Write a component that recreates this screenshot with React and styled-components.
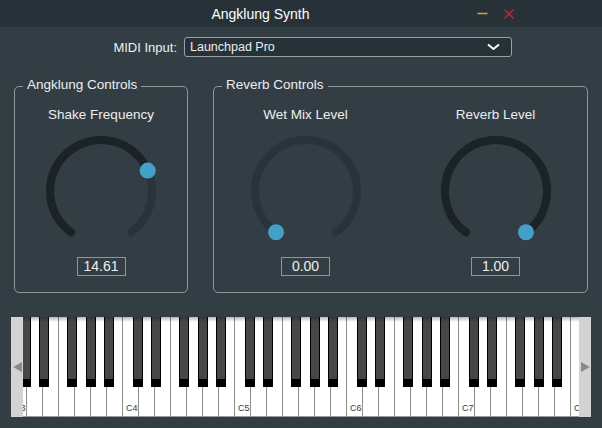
import React from 'react';
import styled, { createGlobalStyle } from 'styled-components';

const GlobalStyle = createGlobalStyle`
  html, body {
    margin: 0;
    padding: 0;
    background: #323e44;
  }
  body {
    font-family: "Liberation Sans", Arial, sans-serif;
  }
`;

const Window = styled.div`
  width: 602px;
  height: 428px;
  background: #323e44;
  color: #eceeef;
  display: flex;
  flex-direction: column;
  overflow: hidden;
`;

const TitleBar = styled.div`
  flex: none;
  height: 27px;
  background: #263238;
  display: flex;
  align-items: center;
  padding-right: 88px;
  font-size: 14px;
  color: #ffffff;
`;

const TitleText = styled.div`
  flex: 1;
  padding-left: 44px;
  text-align: center;
`;

const TitleButtons = styled.div`
  display: flex;
  align-items: center;
  gap: 16px;

  svg {
    display: block;
  }
`;

const MidiRow = styled.div`
  display: flex;
  align-items: center;
  padding-top: 10px;
  height: 20px;
`;

const MidiLabel = styled.div`
  width: 177px;
  margin-right: 7px;
  text-align: right;
  font-size: 13px;
`;

const Combo = styled.div`
  width: 328px;
  height: 20px;
  box-sizing: border-box;
  border: 1px solid #97a0a4;
  border-radius: 3px;
  background: #263238;
  display: flex;
  align-items: center;
  justify-content: space-between;
  padding: 0 11px 0 5px;
  font-size: 12.5px;
`;

const GroupRow = styled.div`
  display: flex;
  gap: 25px;
  margin-top: 29px;
  padding: 0 14px;
  height: 207px;
`;

const Group = styled.div`
  position: relative;
  box-sizing: border-box;
  height: 207px;
  border: 1.5px solid #8d979c;
  border-radius: 5px;
  display: flex;
  gap: ${p => (p.$gap ? `${p.$gap}px` : '0')};
  width: ${p => (p.$width ? `${p.$width}px` : 'auto')};
  flex: ${p => (p.$width ? 'none' : '1')};
`;

const GroupTitle = styled.div`
  position: absolute;
  top: -10px;
  left: 8px;
  padding: 0 4px;
  background: #323e44;
  font-size: 13.5px;
  line-height: 16px;
`;

const KnobColumn = styled.div`
  display: flex;
  flex-direction: column;
  align-items: center;
  padding-top: 20px;
  width: ${p => (p.$width ? `${p.$width}px` : '100%')};
  flex: none;

  svg {
    display: block;
    margin-top: 8px;
  }
`;

const KnobLabel = styled.div`
  font-size: 13.5px;
  line-height: 16px;
  white-space: nowrap;
`;

const ValueBox = styled.div`
  margin-top: 6px;
  width: 49px;
  height: 19px;
  box-sizing: border-box;
  border: 1px solid #8d979c;
  font-size: 14px;
  line-height: 17px;
  text-align: center;
`;

const Keyboard = styled.div`
  position: relative;
  margin: 24px 11px 0;
  width: 580px;
  height: 100px;
  overflow: hidden;
  background: #ffffff;
  display: flex;

  &::after {
    content: '';
    position: absolute;
    left: 0;
    right: 0;
    top: 0;
    height: 5px;
    background: linear-gradient(rgba(0, 0, 0, 0.28), rgba(0, 0, 0, 0));
    pointer-events: none;
  }
`;

const WhiteKey = styled.div`
  flex: none;
  width: 16px;
  height: 100px;
  box-sizing: border-box;
  border-right: 1px solid #8c8c8c;
  border-bottom: 1px solid #9a9a9a;
  background: #ffffff;
  display: flex;
  align-items: flex-end;
  padding: 0 0 3px 3px;
  font-size: 9px;
  color: #3a3a3a;
  white-space: nowrap;
`;

const BlackKey = styled.div`
  position: absolute;
  top: 0;
  width: 10px;
  height: 70px;
  box-sizing: border-box;
  background: #474747;
  border: 1px solid #000000;
  border-top: none;
  border-bottom: 8px solid #000000;
`;

const ScrollButton = styled.div`
  position: absolute;
  top: 0;
  bottom: 0;
  ${p => (p.$side === 'left' ? 'left: 0;' : 'right: 0;')}
  width: 12px;
  background: #d3d3d3;
  display: flex;
  align-items: center;
  justify-content: center;
  z-index: 2;

  svg {
    display: block;
  }
`;

const R = 51;
const START = -0.8 * Math.PI;
const END = 0.8 * Math.PI;

const polar = a => [60 + R * Math.sin(a), 60 - R * Math.cos(a)];

const arcPath = (a0, a1) => {
  const [x0, y0] = polar(a0);
  const [x1, y1] = polar(a1);
  const large = a1 - a0 > Math.PI ? 1 : 0;
  return `M ${x0} ${y0} A ${R} ${R} 0 ${large} 1 ${x1} ${y1}`;
};

const Knob = ({ label, value, min, max, width }) => {
  const frac = (value - min) / (max - min);
  const angle = START + frac * (END - START);
  const [tx, ty] = polar(angle);
  return (
    <KnobColumn $width={width}>
      <KnobLabel>{label}</KnobLabel>
      <svg width="120" height="120" viewBox="0 0 120 120">
        <path d={arcPath(START, END)} fill="none" stroke="#29343a" strokeWidth="8" strokeLinecap="round" />
        {frac > 0 && (
          <path d={arcPath(START, angle)} fill="none" stroke="#1b2327" strokeWidth="8" strokeLinecap="round" />
        )}
        <circle cx={tx} cy={ty} r="8" fill="#42a1c9" />
      </svg>
      <ValueBox>{value.toFixed(2)}</ValueBox>
    </KnobColumn>
  );
};

const whiteKeys = Array.from({ length: 37 }, (_, i) => ({
  id: i,
  label: i % 7 === 0 ? `C${3 + Math.floor(i / 7)}` : '',
}));

const BLACK_OFFSETS = [9.7, 28, 56.3, 75, 93];
const blackKeys = [];
for (let o = 0; o < 6; o++) {
  BLACK_OFFSETS.forEach((off, j) => {
    const left = o * 112 + off;
    if (left < 580) blackKeys.push({ id: `${o}-${j}`, left });
  });
}

const App = () => (
  <>
    <GlobalStyle />
    <Window>
      <TitleBar>
        <TitleText>Angklung Synth</TitleText>
        <TitleButtons>
          <svg width="11" height="10" viewBox="0 0 11 10">
            <line x1="0.5" y1="4.5" x2="10.5" y2="4.5" stroke="#c9a23c" strokeWidth="1.6" />
          </svg>
          <svg width="10" height="10" viewBox="0 0 10 10">
            <line x1="0.5" y1="0.5" x2="9.5" y2="9.5" stroke="#c8262a" strokeWidth="1.3" />
            <line x1="9.5" y1="0.5" x2="0.5" y2="9.5" stroke="#c8262a" strokeWidth="1.3" />
          </svg>
        </TitleButtons>
      </TitleBar>

      <MidiRow>
        <MidiLabel>MIDI Input:</MidiLabel>
        <Combo>
          <span>Launchpad Pro</span>
          <svg width="13" height="8" viewBox="0 0 13 8">
            <polyline points="1,1.5 6.5,6 12,1.5" fill="none" stroke="#ffffff" strokeWidth="2" strokeLinejoin="round" />
          </svg>
        </Combo>
      </MidiRow>

      <GroupRow>
        <Group $width={174}>
          <GroupTitle>Angklung Controls</GroupTitle>
          <Knob label="Shake Frequency" value={14.61} min={0} max={20} />
        </Group>
        <Group $gap={7}>
          <GroupTitle>Reverb Controls</GroupTitle>
          <Knob label="Wet Mix Level" value={0} min={0} max={1} width={183} />
          <Knob label="Reverb Level" value={1} min={0} max={1} width={183} />
        </Group>
      </GroupRow>

      <Keyboard>
        {whiteKeys.map(k => (
          <WhiteKey key={k.id}>{k.label}</WhiteKey>
        ))}
        {blackKeys.map(k => (
          <BlackKey key={k.id} style={{ left: k.left }} />
        ))}
        <ScrollButton $side="left">
          <svg width="9" height="10" viewBox="0 0 9 10">
            <polygon points="0,5 9,0 9,10" fill="#8a8a8a" />
          </svg>
        </ScrollButton>
        <ScrollButton $side="right">
          <svg width="9" height="10" viewBox="0 0 9 10">
            <polygon points="9,5 0,0 0,10" fill="#8a8a8a" />
          </svg>
        </ScrollButton>
      </Keyboard>
    </Window>
  </>
);

export default App;
